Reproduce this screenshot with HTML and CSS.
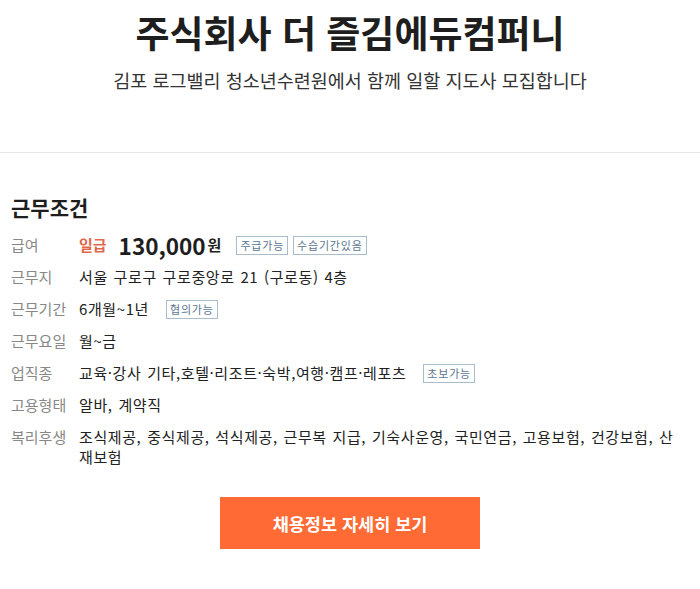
FILE: index.html
```html
<!DOCTYPE html>
<html lang="ko">
<head>
<meta charset="utf-8">
<link rel="stylesheet" href="styles.css">
</head>
<body>
<header class="head">
  <h1 class="title">주식회사 더 즐김에듀컴퍼니</h1>
  <p class="sub">김포 로그밸리 청소년수련원에서 함께 일할 지도사 모집합니다</p>
</header>
<section class="cond">
  <h2 class="cond-title">근무조건</h2>
  <dl class="rows">
    <div class="row">
      <dt>급여</dt>
      <dd class="line"><span class="pay-type">일급</span><span class="pay-num">130,000</span><span class="pay-won">원</span><span class="tag">주급가능</span><span class="tag">수습기간있음</span></dd>
    </div>
    <div class="row"><dt>근무지</dt><dd>서울 구로구 구로중앙로 21 (구로동) 4층</dd></div>
    <div class="row"><dt>근무기간</dt><dd class="line"><span>6개월~1년</span><span class="tag tag-gap">협의가능</span></dd></div>
    <div class="row"><dt>근무요일</dt><dd>월~금</dd></div>
    <div class="row"><dt>업직종</dt><dd class="line"><span>교육·강사 기타,호텔·리조트·숙박,여행·캠프·레포츠</span><span class="tag tag-gap">초보가능</span></dd></div>
    <div class="row"><dt>고용형태</dt><dd>알바, 계약직</dd></div>
    <div class="row"><dt>복리후생</dt><dd>조식제공, 중식제공, 석식제공, 근무복 지급, 기숙사운영, 국민연금, 고용보험, 건강보험, 산재보험</dd></div>
  </dl>
  <div class="btn-wrap"><a class="btn">채용정보 자세히 보기</a></div>
</section>
</body>
</html>
```
FILE: styles.css
```css
* { box-sizing: border-box; }
body {
  margin: 0;
  font-family: "Noto Sans CJK KR", "Noto Sans", sans-serif;
  color: #222;
  background: #fff;
}
.head {
  text-align: center;
  padding-top: 6px;
  height: 153px;
  border-bottom: 1px solid #e8e8e8;
}
.title {
  margin: 0;
  font-size: 37px;
  line-height: 52px;
  font-weight: 700;
  color: #1e1e1e;
}
.sub {
  margin: 9px 0 0;
  font-size: 18.5px;
  line-height: 26px;
  color: #333;
}
.cond {
  padding: 39px 20px 0 11px;
}
.cond-title {
  margin: 0 0 7px;
  font-size: 21px;
  line-height: 30px;
  font-weight: 700;
  color: #1e1e1e;
}
.rows { margin: 0; }
.row {
  display: flex;
  align-items: flex-start;
  font-size: 15px;
  line-height: 20px;
  padding: 6px 0;
}
.row dt {
  width: 68px;
  flex: none;
  color: #888;
}
.row dd {
  margin: 0;
  color: #222;
  letter-spacing: 0.6px;
  word-spacing: 1px;
}
.row dd.line {
  display: flex;
  align-items: center;
  height: 20px;
}
.pay-type { color: #e0684a; font-weight: 700; margin-right: 12px; letter-spacing: 0; }
.pay-num { font-size: 22.5px; font-weight: 700; color: #1e1e1e; line-height: 20px; letter-spacing: 0; }
.pay-won { font-weight: 700; margin-left: 2px; margin-right: 15px; letter-spacing: 0; }
.tag {
  display: block;
  flex: none;
  border: 1px solid #a9bccc;
  color: #5a7590;
  font-size: 11px;
  line-height: 17px;
  padding: 0 3px;
  margin-right: 5px;
  letter-spacing: 0.8px;
}
.tag-gap { margin-left: 17px; }
.btn-wrap {
  display: flex;
  justify-content: center;
  padding-top: 24px;
  padding-right: 0;
  margin-right: -9px;
}
.btn {
  display: flex;
  align-items: center;
  justify-content: center;
  width: 260px;
  height: 52px;
  background: #ff6a35;
  color: #fff;
  font-size: 17.5px;
  font-weight: 700;
}
```
